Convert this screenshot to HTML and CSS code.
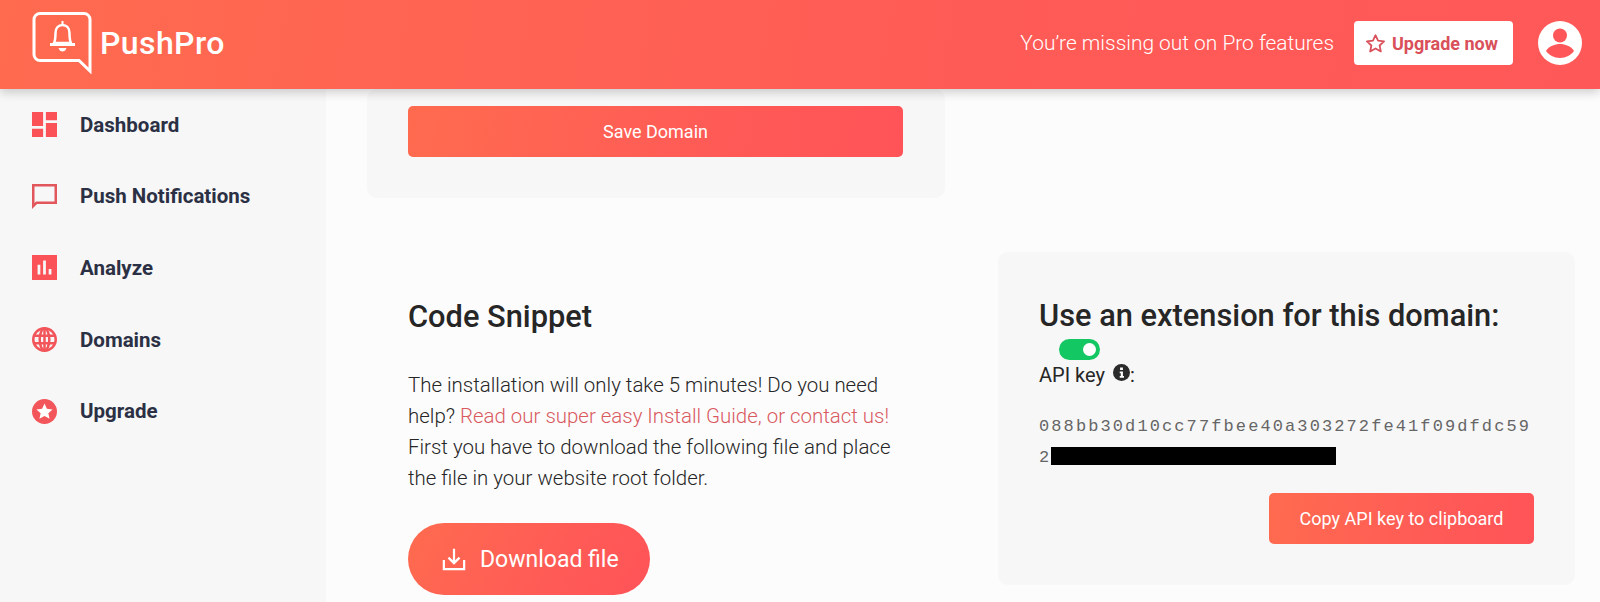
FILE: index.html
```html
<!DOCTYPE html>
<html lang="en">
<head>
  <meta charset="utf-8">
  <title>PushPro</title>
  <link rel="stylesheet" href="styles.css">
</head>
<body>
  <header class="topbar">
    <div class="logo">
      <svg class="logo-icon" viewBox="0 0 60 62" fill="none" stroke="#fff" stroke-width="3">
        <path d="M8 1.500h44a6 6 0 0 1 6 6V59L47 48.500H8a6 6 0 0 1-6-6v-35a6 6 0 0 1 6-6z"/>
        <path d="M22 31c1-2 1.500-5 1.500-10 0-5 3-8 7-8s7 3 7 8c0 5 .5 8 1.500 10z" stroke-linejoin="round" stroke-width="2.500"/>
        <path d="M18 32.500h25" stroke-width="3"/>
        <path d="M26.500 36h8c-.5 2.500-2.500 3.500-4 3.500s-3.500-1-4-3.500z" fill="#fff" stroke="none"/>
        <path d="M30.500 9v4" stroke-width="2"/>
      </svg>
      <span class="logo-text">PushPro</span>
    </div>
    <div class="topbar-right">
      <span class="missing">You’re missing out on Pro features</span>
      <a class="upgrade-btn">
        <svg class="upgrade-star" viewBox="0 0 24 24" fill="none" stroke="#d9505a" stroke-width="2" stroke-linejoin="round">
          <path d="M12 2.500l2.900 6.300 6.900.8-5.100 4.700 1.400 6.800L12 17.700l-6.100 3.400 1.400-6.800-5.100-4.700 6.900-.8z"/>
        </svg>
        Upgrade now
      </a>
      <svg class="avatar" viewBox="0 0 44 44">
        <circle cx="22" cy="22" r="22" fill="#fff"/>
        <circle cx="22" cy="14.500" r="7" fill="#ff5659"/>
        <path d="M8 30c3-5 9-7 14-7s11 2 14 7c-3 4-8 7-14 7S11 34 8 30z" fill="#ff5659"/>
      </svg>
    </div>
  </header>

  <div class="layout">
    <nav class="sidebar">
      <a class="nav-item">
        <svg class="nav-icon" viewBox="3 3 18 18" fill="#fb5257"><path d="M3 13h8V3H3v10zm0 8h8v-6H3v6zm10 0h8V11h-8v10zm0-18v6h8V3h-8z"/></svg>
        Dashboard
      </a>
      <a class="nav-item">
        <svg class="nav-icon" viewBox="2 2 20 20" fill="#e2575c" fill-rule="evenodd"><path d="M2 2h20v16H6l-4 4zM4 4v13.200L5.200 16H20V4z"/></svg>
        Push Notifications
      </a>
      <a class="nav-item">
        <svg class="nav-icon" viewBox="3 3 18 18" fill="#fb5257" fill-rule="evenodd"><path d="M3 3h18v18H3zM7 10v7h2v-7zM11 7v10h2V7zM15 13v4h2v-4z"/></svg>
        Analyze
      </a>
      <a class="nav-item">
        <svg class="nav-icon" viewBox="0 0 26 26" fill="none" stroke="#f2555a" stroke-width="2.600">
          <circle cx="13" cy="13" r="11.700"/>
          <ellipse cx="13" cy="13" rx="5" ry="11.500"/>
          <path d="M13 1.500v23M2 9h22M2 17h22"/>
        </svg>
        Domains
      </a>
      <a class="nav-item">
        <svg class="nav-icon" viewBox="0 0 26 26">
          <circle cx="13" cy="13" r="13" fill="#f2555a"/>
          <path d="M13 4.800l2.500 5.400 5.900.6-4.400 4 1.300 5.800-5.300-3-5.300 3L9 14.800l-4.400-4 5.900-.6z" fill="#fff"/>
        </svg>
        Upgrade
      </a>
    </nav>

    <main class="content">
      <section class="card domain-card">
        <button class="btn btn-wide">Save Domain</button>
      </section>

      <div class="columns">
        <section class="snippet">
          <h2>Code Snippet</h2>
          <p>The installation will only take 5 minutes! Do you need help? <a class="link">Read our super easy Install Guide, or contact us!</a> First you have to download the following file and place the file in your website root folder.</p>
          <a class="download-btn">
            <svg class="download-icon" viewBox="0 0 26 26" fill="none" stroke="#fff" stroke-width="2.400">
              <path d="M2 14v10h22V14M13 2v15M7 11.500l6 6 6-6"/>
            </svg>
            Download file
          </a>
        </section>

        <section class="card extension-card">
          <h2>Use an extension for this domain:</h2>
          <div class="toggle"><span class="toggle-dot"></span></div>
          <div class="api-label">
            API key
            <svg class="info-icon" viewBox="0 0 24 24"><circle cx="12" cy="12" r="12" fill="#2b2b2b"/><path d="M10 5h4v3.500h-4zM9.500 10.500H14V17h1.500v2.500h-6V17H11v-4H9.500z" fill="#fff"/></svg>:
          </div>
          <div class="api-key">088bb30d10cc77fbee40a303272fe41f09dfdc59 2<span class="redacted"></span></div>
          <div class="card-actions">
            <button class="btn btn-copy">Copy API key to clipboard</button>
          </div>
        </section>
      </div>
    </main>
  </div>
</body>
</html>
```

FILE: styles.css
```css
* {
  box-sizing: border-box;
}
html,
body {
  margin: 0;
  height: 602px;
  overflow: hidden;
}
body {
  background-color: #fcfcfc;
  color: #262626;
  font-family: Roboto, "Liberation Sans", sans-serif;
}
.topbar {
  display: flex;
  justify-content: space-between;
  align-items: center;
  height: 89px;
  padding: 0 18px 3px 32px;
  background: linear-gradient(100deg, #ff6b4f 0%, #ff5b56 60%, #ff5858 100%);
  box-shadow: 0 3px 10px rgba(0, 0, 0, 0.2);
  position: relative;
  z-index: 2;
}
.logo {
  display: flex;
  align-items: center;
  gap: 8px;
}
.logo-icon {
  width: 60px;
  height: 62px;
}
.logo-text {
  color: #fff;
  font-size: 32px;
  font-weight: 500;
  letter-spacing: 0.4px;
}
.topbar-right {
  display: flex;
  align-items: center;
}
.missing {
  color: #fff;
  font-size: 20.9px;
  font-weight: 300;
  margin-right: 20px;
}
.upgrade-btn {
  display: flex;
  align-items: center;
  justify-content: center;
  gap: 6px;
  width: 159px;
  height: 44px;
  padding-right: 4px;
  background-color: #fff;
  border-radius: 4px;
  color: #d9505a;
  font-size: 18px;
  font-weight: 700;
}
.upgrade-star {
  width: 21px;
  height: 21px;
}
.avatar {
  width: 44px;
  height: 44px;
  margin-left: 25px;
}
.layout {
  display: flex;
  height: 513px;
}
.sidebar {
  width: 326px;
  flex-shrink: 0;
  background-color: #f7f7f7;
  padding-left: 32px;
}
.nav-item {
  display: flex;
  align-items: center;
  height: 71.6px;
  color: #2b3044;
  font-size: 20.5px;
  font-weight: 700;
}
.nav-icon {
  width: 25px;
  height: 25px;
  margin-right: 23px;
  flex-shrink: 0;
}
.content {
  flex: 1;
  padding-left: 41px;
  overflow: hidden;
}
.card {
  background-color: #f7f7f7;
  border-radius: 10px;
}
.domain-card {
  width: 578px;
  height: 109px;
  padding: 17px 42px 0 41px;
}
.btn {
  border: none;
  border-radius: 5px;
  background: linear-gradient(100deg, #ff6b4f, #ff5b56 60%, #ff5358);
  color: #fff;
  font-family: Roboto, "Liberation Sans", sans-serif;
  font-size: 18px;
  height: 51px;
}
.btn-wide {
  width: 100%;
}
.columns {
  display: flex;
  justify-content: space-between;
  margin-top: 54px;
  padding-right: 25px;
}
.snippet {
  padding: 47px 0 0 41px;
  width: 540px;
}
.snippet h2,
.extension-card h2 {
  margin: 0;
  font-size: 30.8px;
  font-weight: 500;
  line-height: 36px;
}
.snippet p {
  margin: 35px 0 0;
  font-size: 20.45px;
  font-weight: 300;
  line-height: 31px;
  width: 490px;
}
.link {
  color: #d9595f;
}
.download-btn {
  display: inline-flex;
  align-items: center;
  gap: 14px;
  margin-top: 29px;
  padding: 0 31px 0 34px;
  height: 72px;
  border-radius: 36px;
  background: linear-gradient(120deg, #ff6b4f, #ff5b56 60%, #ff5358);
  color: #fff;
  font-size: 23px;
}
.download-icon {
  width: 24px;
  height: 24px;
}
.extension-card {
  width: 577px;
  height: 333px;
  padding: 46px 41px 0;
}
.toggle {
  width: 41px;
  height: 21px;
  margin: 5px 0 0 20px;
  padding: 4px;
  display: flex;
  justify-content: flex-end;
  background-color: #13c763;
  border-radius: 11px;
}
.toggle-dot {
  width: 13px;
  height: 13px;
  background-color: #fff;
  border-radius: 50%;
}
.api-label {
  font-size: 20px;
  line-height: 30px;
}
.info-icon {
  width: 17px;
  height: 17px;
  margin-left: 3px;
  vertical-align: 1px;
}
.api-key {
  margin-top: 21px;
  font-family: "Liberation Mono", monospace;
  font-size: 17px;
  letter-spacing: 2.1px;
  line-height: 31px;
  color: #666;
  word-break: break-all;
  width: 496px;
}
.redacted {
  display: inline-block;
  width: 285px;
  height: 18px;
  background-color: #000;
  vertical-align: -3px;
}
.card-actions {
  display: flex;
  justify-content: flex-end;
  margin-top: 20px;
}
.btn-copy {
  width: 265px;
}
```
